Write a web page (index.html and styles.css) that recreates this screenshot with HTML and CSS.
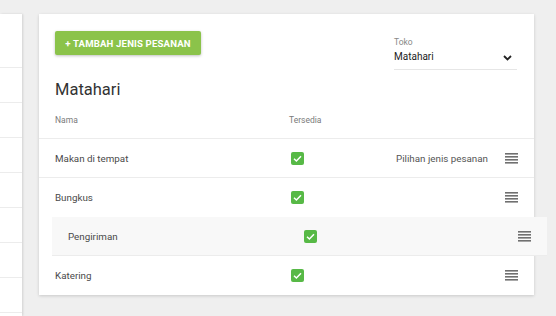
FILE: index.html
```html
<!DOCTYPE html>
<html>
<head>
<meta charset="utf-8">
<link rel="stylesheet" href="styles.css">
</head>
<body>
<div class="page">
  <aside class="side">
    <div class="side-item first"></div>
    <div class="side-item"></div>
    <div class="side-item"></div>
    <div class="side-item"></div>
    <div class="side-item"></div>
    <div class="side-item"></div>
    <div class="side-item"></div>
    <div class="side-item"></div>
  </aside>
  <main class="card">
    <div class="topbar">
      <button class="btn">+ TAMBAH JENIS PESANAN</button>
      <div class="select">
        <div class="select-label">Toko</div>
        <div class="select-field">
          <span>Matahari</span>
          <svg class="chev" width="9" height="6" viewBox="0 0 9 6"><polyline points="1,1 4.5,4.5 8,1" fill="none" stroke="#222" stroke-width="1.8"/></svg>
        </div>
      </div>
    </div>
    <h1 class="title">Matahari</h1>
    <div class="row head">
      <span>Nama</span>
      <span>Tersedia</span>
    </div>
    <div class="row line">
      <span>Makan di tempat</span>
      <span class="cb"><svg width="13" height="13" viewBox="0 0 13 13"><polyline points="3,6.8 5.4,9 10,4.3" fill="none" stroke="#fff" stroke-width="1.5"/></svg></span>
      <span class="extra">Pilihan jenis pesanan</span>
      <span class="drag"><svg width="13" height="11" viewBox="0 0 13 11"><rect y="0" width="13" height="1.6"/><rect y="3" width="13" height="1.6"/><rect y="6" width="13" height="1.6"/><rect y="9" width="13" height="1.6"/></svg></span>
    </div>
    <div class="row">
      <span>Bungkus</span>
      <span class="cb"><svg width="13" height="13" viewBox="0 0 13 13"><polyline points="3,6.8 5.4,9 10,4.3" fill="none" stroke="#fff" stroke-width="1.5"/></svg></span>
      <span class="extra"></span>
      <span class="drag"><svg width="13" height="11" viewBox="0 0 13 11"><rect y="0" width="13" height="1.6"/><rect y="3" width="13" height="1.6"/><rect y="6" width="13" height="1.6"/><rect y="9" width="13" height="1.6"/></svg></span>
    </div>
    <div class="row line dragging">
      <span>Pengiriman</span>
      <span class="cb"><svg width="13" height="13" viewBox="0 0 13 13"><polyline points="3,6.8 5.4,9 10,4.3" fill="none" stroke="#fff" stroke-width="1.5"/></svg></span>
      <span class="extra"></span>
      <span class="drag"><svg width="13" height="11" viewBox="0 0 13 11"><rect y="0" width="13" height="1.6"/><rect y="3" width="13" height="1.6"/><rect y="6" width="13" height="1.6"/><rect y="9" width="13" height="1.6"/></svg></span>
    </div>
    <div class="row">
      <span>Katering</span>
      <span class="cb"><svg width="13" height="13" viewBox="0 0 13 13"><polyline points="3,6.8 5.4,9 10,4.3" fill="none" stroke="#fff" stroke-width="1.5"/></svg></span>
      <span class="extra"></span>
      <span class="drag"><svg width="13" height="11" viewBox="0 0 13 11"><rect y="0" width="13" height="1.6"/><rect y="3" width="13" height="1.6"/><rect y="6" width="13" height="1.6"/><rect y="9" width="13" height="1.6"/></svg></span>
    </div>
  </main>
</div>
</body>
</html>
```
FILE: styles.css
```css
* { box-sizing: border-box; }
html, body { margin: 0; padding: 0; }
body {
  background: #efefef;
  font-family: Roboto, "Liberation Sans", sans-serif;
  color: #444;
  width: 556px;
  height: 316px;
  overflow: hidden;
}
.page {
  display: flex;
  align-items: flex-start;
  gap: 17px;
  padding-top: 14px;
}
.side {
  width: 22px;
  height: 302px;
  background: #fff;
  box-shadow: 1px 0 2px rgba(0,0,0,0.12);
  display: flex;
  flex-direction: column;
}
.side-item {
  height: 35px;
  border-bottom: 1px solid #ececec;
  flex: none;
}
.side-item.first { height: 54px; }
.card {
  width: 495px;
  height: 281px;
  background: #fff;
  box-shadow: 0 1px 3px rgba(0,0,0,0.16);
  padding-top: 17px;
}
.topbar {
  display: flex;
  justify-content: space-between;
  align-items: flex-start;
  padding: 0 17px 0 16px;
}
.btn {
  width: 146px;
  height: 24px;
  border: none;
  border-radius: 2px;
  background: #8bc34a;
  color: #fff;
  font-family: Roboto, "Liberation Sans", sans-serif;
  font-weight: 700;
  font-size: 9.6px;
  letter-spacing: 0.15px;
  padding: 0;
  box-shadow: 0 1px 3px rgba(0,0,0,0.25);
}
.select {
  width: 123px;
  margin-top: 5px;
  border-bottom: 1px solid #e6e6e6;
}
.select-label {
  font-size: 8.5px;
  color: #888;
  line-height: 12px;
}
.select-field {
  display: flex;
  justify-content: space-between;
  align-items: center;
  font-size: 10px;
  color: #222;
  line-height: 14px;
  padding: 2px 0 5px;
}
.chev { margin-right: 5px; margin-top: 2px; }
.title {
  margin: 8px 0 0;
  padding-left: 16px;
  font-size: 16.5px;
  font-weight: 400;
  line-height: 24px;
  color: #333;
}
.row {
  display: grid;
  grid-template-columns: 234px 1fr auto auto;
  align-items: center;
  height: 39px;
  padding: 0 16px;
  font-size: 9.8px;
  color: #4a4a4a;
}
.row.head {
  display: flex;
  gap: 0;
  height: 37px;
  border-bottom: 1px solid #ececec;
  font-size: 8.5px;
  color: #7a7a7a;
}
.row.head span:first-child { width: 234px; }
.row.line { border-bottom: 1px solid #ececec; }
.cb {
  width: 13px;
  height: 13px;
  margin-left: 2px;
  border-radius: 2px;
  background: #57b946;
  display: block;
}
.cb svg { display: block; }
.extra { color: #555; margin-right: 17px; }
.drag { color: #707070; display: block; height: 11px; }
.drag svg { display: block; fill: currentColor; }
.dragging {
  position: relative;
  left: 13px;
  background: #f8f8f8;
}
```
